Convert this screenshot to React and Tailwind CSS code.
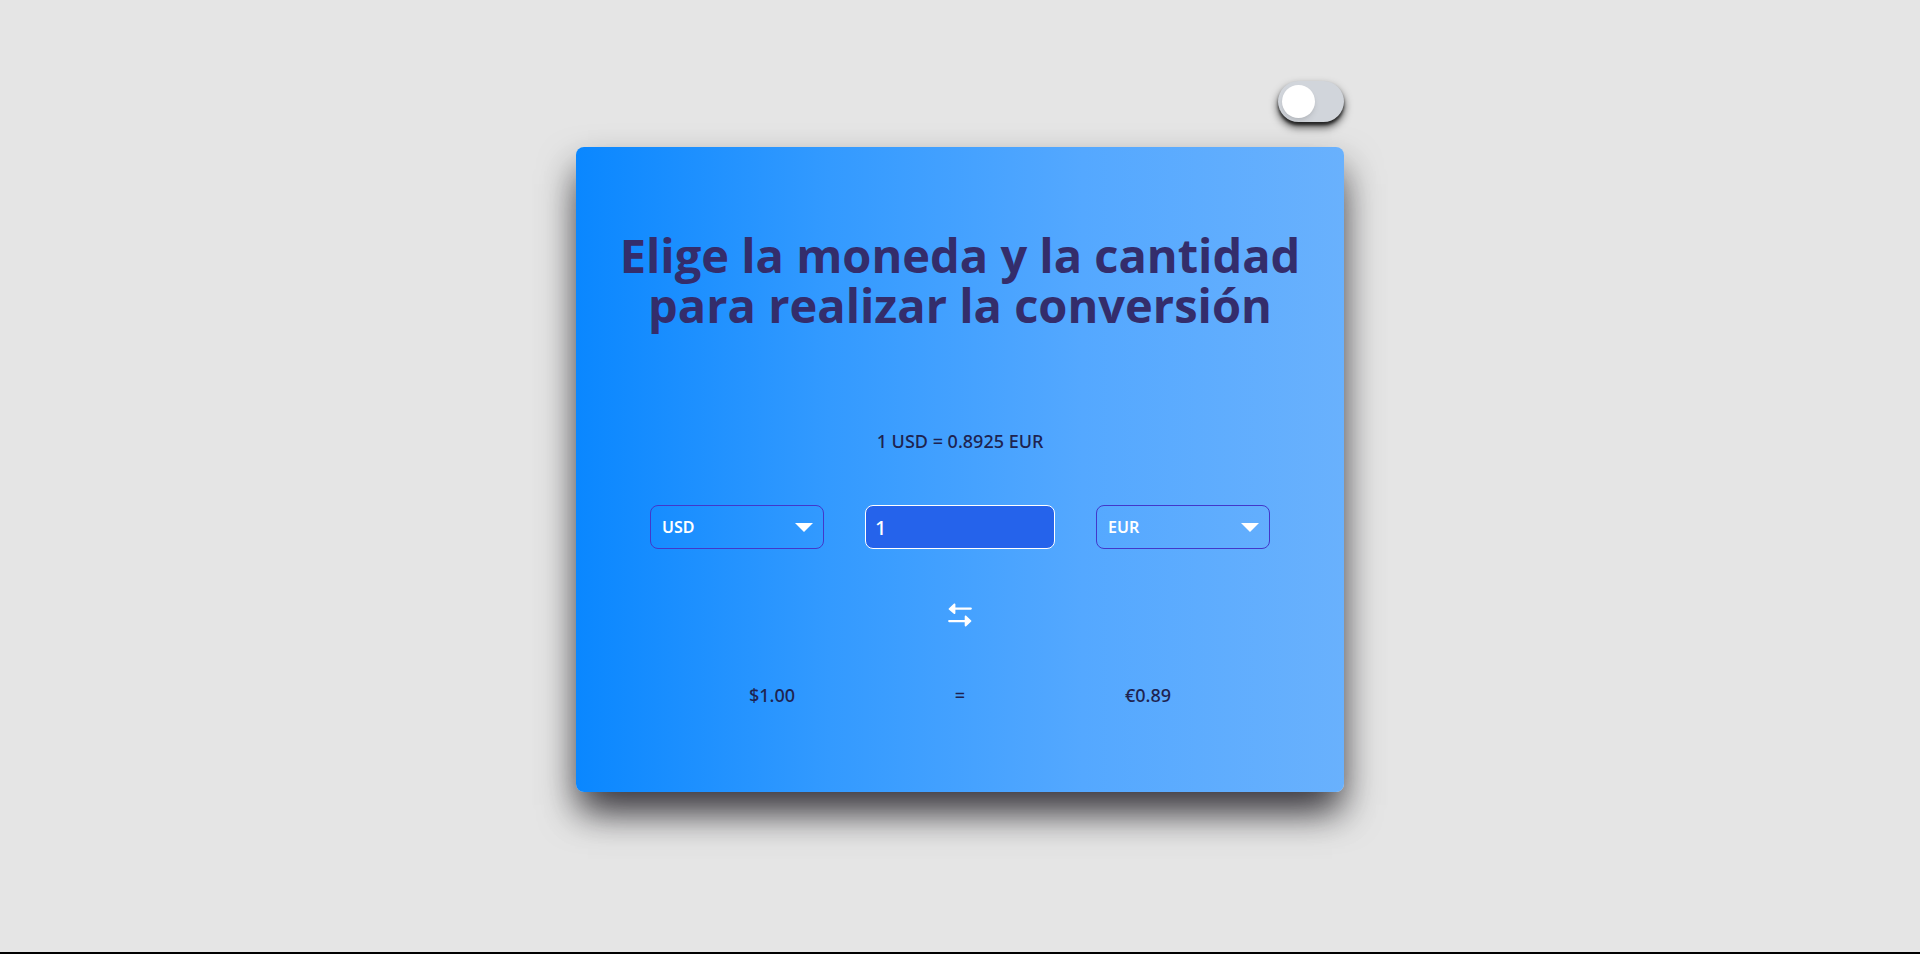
import { useState } from "react";

const currencies = ["USD", "EUR", "GBP", "JPY", "MXN"];

function CurrencySelect({ label, value, onChange }) {
  return (
    <div className="relative w-[174px]">
      <select
        aria-label={label}
        value={value}
        onChange={(e) => onChange(e.target.value)}
        className="h-11 w-full appearance-none rounded-lg border border-[#4338ca] bg-transparent px-[11px] text-base font-semibold text-white"
      >
        {currencies.map((c) => (
          <option key={c} className="text-black">{c}</option>
        ))}
      </select>
      <svg viewBox="0 0 18 9" className="pointer-events-none absolute top-[18px] right-[11px] h-[9px] w-[18px] fill-white" aria-hidden="true">
        <path d="M0 0H18L9 9Z" />
      </svg>
    </div>
  );
}

export default function App() {
  const [from, setFrom] = useState("USD");
  const [to, setTo] = useState("EUR");
  const [amount, setAmount] = useState("1");
  const [dark, setDark] = useState(false);

  const swap = () => {
    setFrom(to);
    setTo(from);
  };

  return (
    <div className="flex min-h-screen flex-col items-center border-b-2 border-black bg-[#e5e5e5] px-4 pt-[81px] font-['Noto_Sans','Open_Sans',sans-serif]">
      <main className="w-full max-w-3xl">
        <div className="mb-[25px] flex justify-end">
          <label className="flex h-[41px] w-[66px] cursor-pointer items-center rounded-full bg-[#d1d5db] px-1 shadow-[0_5px_8px_rgba(0,0,0,0.7),0_3px_3px_rgba(0,0,0,0.6)]">
            <input
              type="checkbox"
              aria-label="Modo oscuro"
              checked={dark}
              onChange={(e) => setDark(e.target.checked)}
              className="peer sr-only"
            />
            <span className="size-[33px] rounded-full bg-white shadow-md transition-transform peer-checked:translate-x-6" />
          </label>
        </div>

        <section className="flex flex-col items-center rounded-lg bg-[linear-gradient(to_right,#0a87ff,#339aff_33%,#54a8ff_66%,#69b1fd)] px-8 pt-[83px] pb-[83px] shadow-[0_25px_36px_-12px_rgba(24,20,32,0.65),0_20px_36px_rgba(0,0,0,0.5)]">
          <h1 className="text-center font-['Open_Sans','Noto_Sans',sans-serif] text-[47px] leading-[50px] font-bold text-[#342d6b]">
            Elige la moneda y la cantidad para realizar la conversión
          </h1>

          <p className="mt-[97px] text-lg leading-7 font-medium text-[#1e2350]">1 USD = 0.8925 EUR</p>

          <div className="mt-[50px] flex items-center gap-[41px]">
            <CurrencySelect label="Moneda de origen" value={from} onChange={setFrom} />
            <input
              aria-label="Cantidad"
              value={amount}
              onChange={(e) => setAmount(e.target.value)}
              className="h-11 w-[190px] rounded-lg border border-white bg-[#2563eb] px-[9px] text-xl font-medium text-white"
            />
            <CurrencySelect label="Moneda de destino" value={to} onChange={setTo} />
          </div>

          <button type="button" onClick={swap} aria-label="Intercambiar monedas" className="mt-[54px] cursor-pointer">
            <svg viewBox="0 0 24 24" className="size-6 fill-white" aria-hidden="true">
              <path d="M.8 5.500 5.800.700C6.400.200 7.400.500 7.400 1.400V4.500H22.800a1.100 1.100 0 0 1 0 2.200H7.400v3.300c0 .900-1 1.200-1.600.700L.8 6.500a.7.7 0 0 1 0-1Z" />
              <path d="M23.200 18.600 18.200 23.300c-.6.500-1.500.200-1.500-.7v-3.400H1.200a1.100 1.100 0 0 1 0-2.200h15.500v-3.500c0-.9.900-1.200 1.500-.7l5 4.800a.7.7 0 0 1 0 1Z" />
            </svg>
          </button>

          <div className="mt-[54px] grid w-full max-w-[564px] grid-cols-3 text-center text-lg leading-7 font-medium text-[#1e2350]">
            <p>$1.00</p>
            <p>=</p>
            <p>€0.89</p>
          </div>
        </section>
      </main>
    </div>
  );
}
